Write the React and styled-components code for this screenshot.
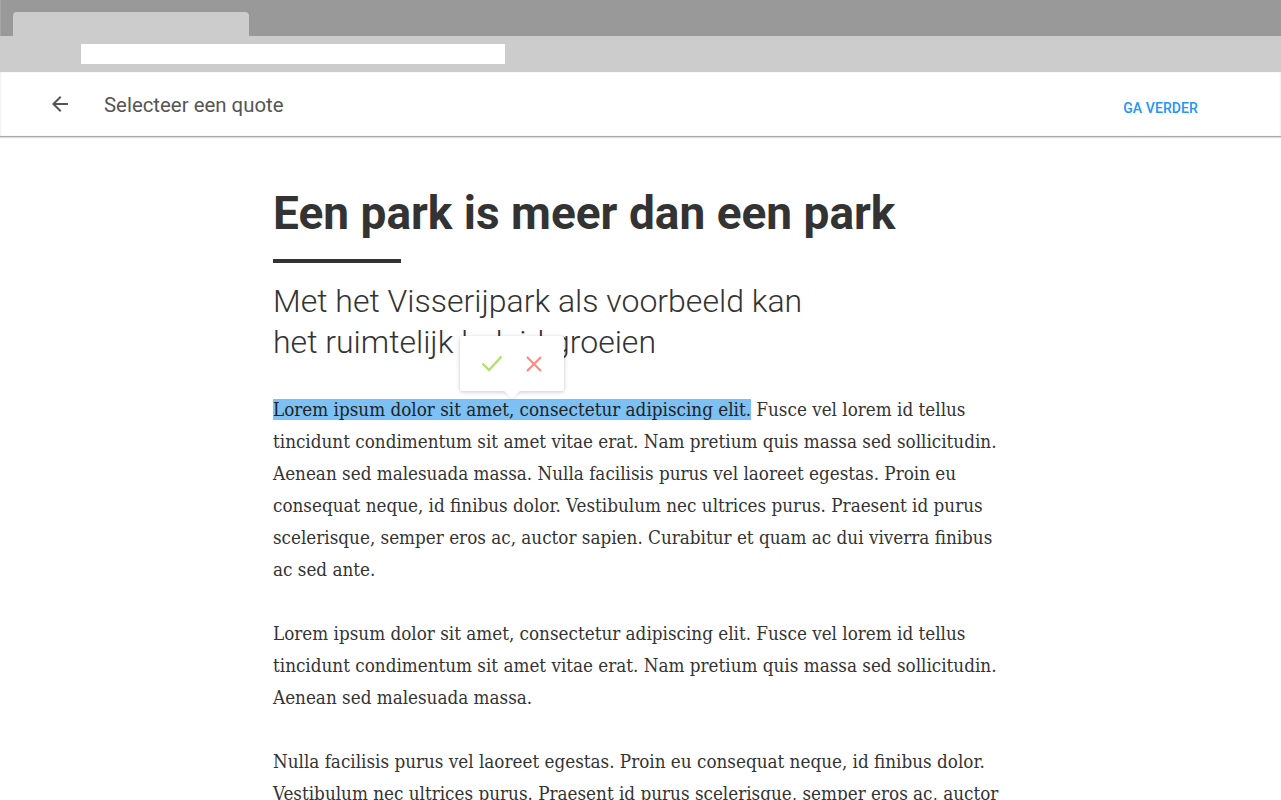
import React from "react";
import styled, { createGlobalStyle } from "styled-components";

const Global = createGlobalStyle`
  html, body { margin: 0; padding: 0; background: #fff; }
  body { font-family: Roboto, "Liberation Sans", sans-serif; overflow: hidden; }
`;

const Frame = styled.div`
  width: 1281px;
  height: 800px;
  overflow: hidden;
`;

const TabStrip = styled.div`
  height: 36px;
  background: #999;
  padding: 12px 0 0 12px;
  box-sizing: border-box;
  display: flex;
  align-items: flex-end;
  border-left: 1px solid #a6a6a6;
`;

const Tab = styled.div`
  width: 236px;
  height: 24px;
  background: #ccc;
  border-radius: 4px 4px 0 0;
`;

const Toolbar = styled.div`
  height: 36px;
  background: #ccc;
  padding: 8px 0 0 81px;
  box-sizing: border-box;
`;

const Omnibox = styled.div`
  width: 424px;
  height: 20px;
  background: #fff;
`;

const AppBar = styled.header`
  position: relative;
  z-index: 1;
  height: 64px;
  display: flex;
  align-items: center;
  padding: 0 83px 0 48px;
  border-bottom: 1px solid #a9a9a9;
  box-shadow: 0 1px 1px rgba(0, 0, 0, 0.12), inset 1px 0 2px rgba(0, 0, 0, 0.06),
    inset -1px 0 2px rgba(0, 0, 0, 0.06);
`;

const BackButton = styled.button`
  border: 0;
  background: none;
  padding: 0;
  width: 24px;
  height: 24px;
  margin-top: -1px;
  display: flex;
  color: #555;
`;

const Title = styled.h1`
  margin: 2px 0 0 32px;
  font-family: Roboto, sans-serif;
  font-weight: 400;
  font-size: 20.4px;
  color: #555;
  flex: 1;
`;

const Action = styled.button`
  border: 0;
  background: none;
  padding: 0;
  margin-top: 8px;
  font-family: Roboto, sans-serif;
  font-weight: 500;
  font-size: 14px;
  letter-spacing: 0.1px;
  color: #2196f3;
`;

const Article = styled.main`
  width: 740px;
  margin-left: 273px;
  padding-top: 43px;
  color: #333;
`;

const Heading = styled.h2`
  margin: 0;
  font-family: Roboto, sans-serif;
  font-weight: 700;
  font-size: 46px;
  line-height: 66px;
  color: #333;
`;

const Rule = styled.div`
  width: 128px;
  height: 4px;
  background: #333;
  margin: 13px 0 18px;
`;

const Subtitle = styled.p`
  margin: 0 0 31px;
  font-family: Roboto, sans-serif;
  font-weight: 300;
  font-size: 32px;
  line-height: 41px;
  color: #333;
`;

const Para = styled.p`
  margin: 0 0 32px;
  font-family: "DejaVu Serif Condensed", "DejaVu Serif", serif;
  font-size: 18.7px;
  line-height: 32px;
  color: #333;
`;

const Highlight = styled.span`
  position: relative;
  background: #7cc0f4;
  color: #222;
`;

const Popover = styled.span`
  position: absolute;
  left: 50%;
  bottom: calc(100% + 8px);
  transform: translateX(-50%);
  width: 104px;
  height: 55px;
  background: #fff;
  border-radius: 2px;
  box-shadow: 0 1px 4px rgba(0, 0, 0, 0.22);
  display: flex;
  align-items: center;
  justify-content: center;
  gap: 22px;
  line-height: 0;

  &::after {
    content: "";
    position: absolute;
    left: 50%;
    top: 100%;
    margin-left: -8px;
    border: 8px solid transparent;
    border-top-color: #fff;
    border-bottom: 0;
    filter: drop-shadow(0 1px 1px rgba(0, 0, 0, 0.1));
  }
`;

const IconButton = styled.span`
  display: inline-flex;
  width: ${(p) => p.$w}px;
  height: 20px;
  margin-top: 1px;
`;

export default function App() {
  return (
    <Frame>
      <Global />
      <TabStrip>
        <Tab />
      </TabStrip>
      <Toolbar>
        <Omnibox />
      </Toolbar>
      <AppBar>
        <BackButton aria-label="Terug">
          <svg width="24" height="24" viewBox="0 0 24 24" fill="currentColor">
            <path d="M20 11H7.83l5.59-5.59L12 4l-8 8 8 8 1.41-1.41L7.83 13H20v-2z" />
          </svg>
        </BackButton>
        <Title>Selecteer een quote</Title>
        <Action>GA VERDER</Action>
      </AppBar>
      <Article>
        <Heading>Een park is meer dan een park</Heading>
        <Rule />
        <Subtitle>
          Met het Visserijpark als voorbeeld kan
          <br />
          het ruimtelijk beleid groeien
        </Subtitle>
        <Para>
          <Highlight>
            Lorem ipsum dolor sit amet, consectetur adipiscing elit.
            <Popover>
              <IconButton $w={22}>
                <svg width="22" height="20" viewBox="0 0 22 20">
                  <polyline points="1.5,9.5 8,16 20.5,2.5" fill="none" stroke="#b4e06e" strokeWidth="2.4" />
                </svg>
              </IconButton>
              <IconButton $w={18}>
                <svg width="18" height="20" viewBox="0 0 18 20">
                  <path d="M2 3 L16 17 M16 3 L2 17" fill="none" stroke="#ff8a82" strokeWidth="2.2" />
                </svg>
              </IconButton>
            </Popover>
          </Highlight>{" "}
          Fusce vel lorem id tellus tincidunt condimentum sit amet vitae erat. Nam pretium quis massa
          sed sollicitudin. Aenean sed malesuada massa. Nulla facilisis purus vel laoreet egestas.
          Proin eu consequat neque, id finibus dolor. Vestibulum nec ultrices purus. Praesent id purus
          scelerisque, semper eros ac, auctor sapien. Curabitur et quam ac dui viverra finibus ac sed
          ante.
        </Para>
        <Para>
          Lorem ipsum dolor sit amet, consectetur adipiscing elit. Fusce vel lorem id tellus tincidunt
          condimentum sit amet vitae erat. Nam pretium quis massa sed sollicitudin. Aenean sed
          malesuada massa.
        </Para>
        <Para>
          Nulla facilisis purus vel laoreet egestas. Proin eu consequat neque, id finibus dolor.
          Vestibulum nec ultrices purus. Praesent id purus scelerisque, semper eros ac, auctor sapien.
          Curabitur et quam ac dui viverra finibus ac sed ante.
        </Para>
      </Article>
    </Frame>
  );
}
